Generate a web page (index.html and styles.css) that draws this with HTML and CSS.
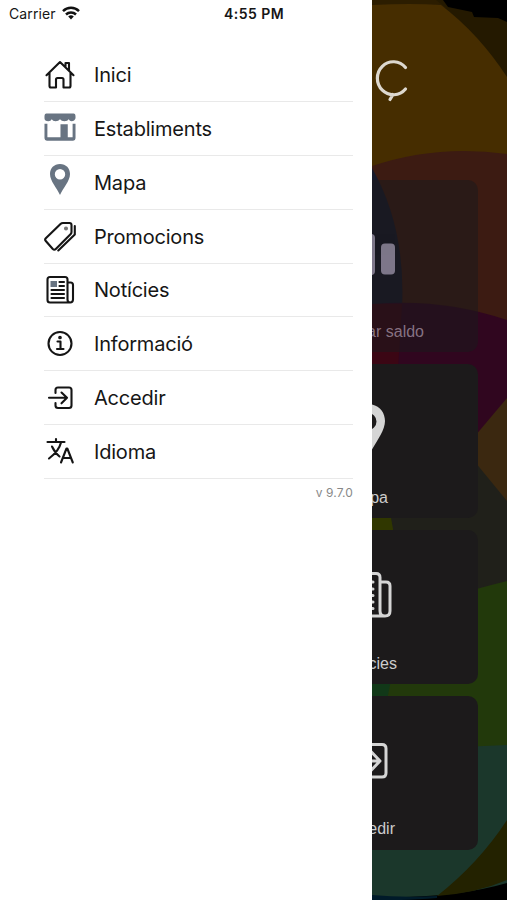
FILE: index.html
```html
<!DOCTYPE html>
<html lang="ca">
<head>
<meta charset="utf-8">
<meta name="viewport" content="width=device-width">
<title>Menú</title>
<link rel="stylesheet" href="styles.css">
</head>
<body>
<div class="screen">
  <aside class="drawer">
    <header class="status">
      <span class="carrier">Carrier</span>
      <svg class="wifi" viewBox="0 0 18 14"><g fill="none" stroke="#111" stroke-width="2.5"><path d="M1 5.1a11.5 11.5 0 0 1 16 0"/><path d="M4 8.5a7.2 7.2 0 0 1 10 0"/></g><path fill="#111" d="M6.2 10.6a4.2 4.2 0 0 1 5.6 0L9 13.6z"/></svg>
      <span class="time">4:55 PM</span>
    </header>
    <nav class="menu">
      <a class="item"><svg class="icon line" viewBox="0 0 32 32"><path d="M2.500 16.200 16 3l13.500 13.200M5.500 14v13q0 1.500 1.500 1.500h5V20.500q0-1.500 1.500-1.500h4.500q1.500 0 1.500 1.500v8H25q1.500 0 1.500-1.500V14M21.500 7.500V4h3.500v7.500"/></svg><span>Inici</span></a>
      <a class="item"><svg class="icon store" viewBox="-.5 0 33 32"><path d="M2 0h28q2 0 2 3v2q-1 3-4 3-2 0-3-2-1 2-4.500 2-3 0-4.500-2-1.500 2-4.500 2-3 0-4-2-1 2-3.500 2Q0 8 0 5V3q0-3 2-3zM0 10.500h3V24.500h13.500V11H24v13.500h5v-14h3V25.500q0 2.500-2.500 2.500h-27Q0 28 0 25.500z"/></svg><span>Establiments</span></a>
      <a class="item"><svg class="icon pin" viewBox="0 0 32 32"><path fill-rule="evenodd" d="M16 0C10 0 6 4.300 6 10c0 7 7 14 10 21 3-7 10-14 10-21C26 4.300 22 0 16 0zm0 5a5.200 5.200 0 1 1 0 10.400A5.200 5.200 0 0 1 16 5z"/></svg><span>Mapa</span></a>
      <a class="item"><svg class="icon line" viewBox="0 0 32 32"><path d="M1.800 17.300 16.500 3q1-1 2.500-1h6.500q2 0 2 2v7q0 1.300-1 2.300L11.800 28q-1.500 1.500-3 0L1.800 20q-1.300-1.300 0-2.700zM30.800 5v8.500L14.300 29.500"/><circle cx="22" cy="7.500" r="1" fill="#777" stroke="#777"/></svg><span>Promocions</span></a>
      <a class="item"><svg class="icon line" viewBox="0 0 32 32"><path d="M26 28.500H6q-2.500 0-2.500-2.500V5.500Q3.500 3 6 3h15q2.500 0 2.500 2.500V25.500q0 3 2.700 3t2.800-3V11q0-2.500-2.500-2.500h-3M15.500 8h4.500M15.500 12h4.500M7.500 16H20M7.500 20H20M7.500 24H20"/><path fill="#687482" stroke="none" d="M6.500 7h6.500v6H6.500z"/></svg><span>Notícies</span></a>
      <a class="item"><svg class="icon line" viewBox="0 0 32 32"><circle cx="16" cy="15.500" r="11.500"/><path d="M13.500 13.500h3v7.500M13 21h6.500"/><circle cx="16" cy="9.500" r=".8" fill="#222"/></svg><span>Informació</span></a>
      <a class="item"><svg class="icon line" viewBox="0 0 32 32"><path d="M11.500 11V8q0-2.500 2.500-2.500h11Q27.500 5.500 27.500 8v15.500q0 2.500-2.500 2.500H14q-2.500 0-2.500-2.500V21M5 15.800H22.500M17.500 10.500 23 15.800l-5.500 5.500"/></svg><span>Accedir</span></a>
      <a class="item"><svg class="icon line" viewBox="0 0 32 32"><path d="M3.500 6H20.500M12 3v3M17 6.500Q15 15 5 22.500M8 10.500q3 6.500 7.500 10M17 26.500l5.500-14h.8l5.500 14M19 22h8"/></svg><span>Idioma</span></a>
    </nav>
    <p class="version">v 9.7.0</p>
  </aside>
  <main class="home">
    <svg class="art" viewBox="372 0 135 900" preserveAspectRatio="none">
      <path fill="#000" d="M372 0h135v900H372z"/>
      <path fill="#241900" d="M372 0h71l5 7 24 5 2 5 24 1 9 4v140H372z"/>
      <path fill="#2c1d00" d="M372 0h64l10 8H372z"/>
      <path fill="#462d00" d="M372 5q40-2 69 0 38 29 66 72v90H372z"/>
      <path fill="#3c1b12" d="M372 166q65-22 135-12v180H372z"/>
      <path fill="#171a2b" d="M372 168q34 60 30 140h-30z"/>
      <path fill="#30061f" d="M372 304q70-6 135 16v130H372z"/>
      <path fill="#3b0614" d="M372 304h30l-4 65h-26z"/>
      <path fill="#20201a" d="M372 432h107l28 30v130H372z"/>
      <path fill="#3b2810" d="m507 398-32 38v26l32 39z"/>
      <path fill="#303700" d="M372 512h18l4 23h-22z"/>
      <path fill="#22390b" d="M372 620q75-24 135-39v170H372z"/>
      <path fill="#113818" d="M372 680h19l-4 20h-15z"/>
      <path fill="#1b372b" d="M372 750q65-2 135-5v138q-55 16-135 14z"/>
      <path fill="#232200" d="M507 820q-28 43-70 76 40-3 70-16z"/>
      <path fill="#001a29" d="M372 895q30 3 65 1v2q-40 3-65 2z"/>
    </svg>
    <svg class="brand" viewBox="0 0 36 44"><path d="M30.500 8.500A16 16.500 0 1 0 30.500 30M18 35.500 15 40.500"/></svg>
    <section class="cards">
      <article class="card faded">
        <svg class="glyph" viewBox="0 0 60 154"><rect x="-11" y="54" width="14" height="41" rx="4" fill="#b3a9c1"/><rect x="9" y="63.500" width="14" height="31" rx="4" fill="#b3a9c1"/></svg>
        <span class="label">ar saldo</span>
      </article>
      <article class="card map">
        <svg class="glyph" viewBox="0 0 60 154"><path fill="#d5d5d5" fill-rule="evenodd" d="M-4 40C7 40 13 48 13 57c0 11-11 23-17 36-6-13-17-25-17-36 0-9 6-17 17-17zm0 9a8.500 8.500 0 1 0 0 17 8.500 8.500 0 0 0 0-17z"/></svg>
        <span class="label">pa</span>
      </article>
      <article class="card news">
        <svg class="glyph" viewBox="0 0 60 154"><path fill="none" stroke="#d5d5d5" stroke-width="3" stroke-linecap="round" d="M-16 43.500H4q4 0 4 4V81q0 5 5 5t5-5V56q0-4-4-4H8M13 86h-29M-8 52H1M-8 59H1M-8 65.500H1M-8 72H1M-8 78.500H1"/></svg>
        <span class="label">cies</span>
      </article>
      <article class="card login">
        <svg class="glyph" viewBox="0 0 60 154"><path fill="none" stroke="#d5d5d5" stroke-width="3" stroke-linecap="round" stroke-linejoin="round" d="M-12 48.500h22q4 0 4 4V77q0 4-4 4h-22M-20 65H8M-1 55.500 8 65l-9 9.500"/></svg>
        <span class="label">edir</span>
      </article>
    </section>
  </main>
</div>
</body>
</html>
```
FILE: styles.css
```css
* { box-sizing: border-box; }
body { margin: 0; font-family: Inter, "Liberation Sans", sans-serif; color: #161616; }
.screen { display: grid; grid-template-columns: 372px 1fr; width: 507px; height: 900px; overflow: hidden; }
.drawer { background: #fff; }
.status { display: flex; align-items: center; height: 27px; padding-left: 9px; font-size: 14px; }
.carrier { width: 47px; letter-spacing: 0.1px; }
.wifi { width: 18px; height: 14px; margin: 0 0 2px 6px; }
.time { margin-left: 144px; font-weight: 600; font-size: 14px; letter-spacing: 0.45px; white-space: nowrap; }
.menu { margin: 21px 19px 0 44px; }
.item { display: flex; align-items: center; gap: 18px; height: 53.800px; padding-top: 0.800px; border-bottom: 1.500px solid #e9e9e9; font-size: 20px; letter-spacing: -0.2px; }
.item:first-child { height: 54.300px; padding-top: 1px; }
.icon { width: 32px; height: 32px; flex: none; }
.line { fill: none; stroke: #151515; stroke-width: 2.100; stroke-linecap: round; stroke-linejoin: round; }
.store, .pin { fill: #687482; }
.pin { margin-bottom: 5px; }
.version { margin: 6px 19px 0 0; font-size: 12px; line-height: 16px; letter-spacing: 0.1px; text-align: right; color: #888; }
.home { position: relative; overflow: hidden; }
.art { position: absolute; inset: 0; width: 100%; height: 100%; }
.brand { position: relative; display: block; width: 36px; height: 44px; margin: 59px 0 77px 2.500px; fill: none; stroke: #ddd8cf; stroke-width: 3.200; stroke-linecap: round; }
.cards { position: relative; display: grid; grid-template-rows: 172px 154px 154px 154px; gap: 12px; width: 106px; }
.card { display: flex; flex-direction: column; justify-content: flex-end; align-items: flex-end; overflow: hidden; background: #1c1a1b; border-radius: 0 10px 10px 0; color: #ccc; font: 16px/20px "Liberation Sans", sans-serif; position: relative; padding-bottom: 10px; }
.glyph { position: absolute; left: 0; top: 0; width: 60px; height: 154px; }
.label { white-space: nowrap; margin-right: 90px; }
.faded { background: rgba(28, 26, 27, 0.55); color: rgba(190, 170, 190, 0.65); }
.faded .glyph { opacity: 0.65; }
.faded .label { margin-right: 54px; }
.news .label { margin-right: 81px; }
.login { padding-bottom: 11px; }
.login .label { margin-right: 83px; }
```
